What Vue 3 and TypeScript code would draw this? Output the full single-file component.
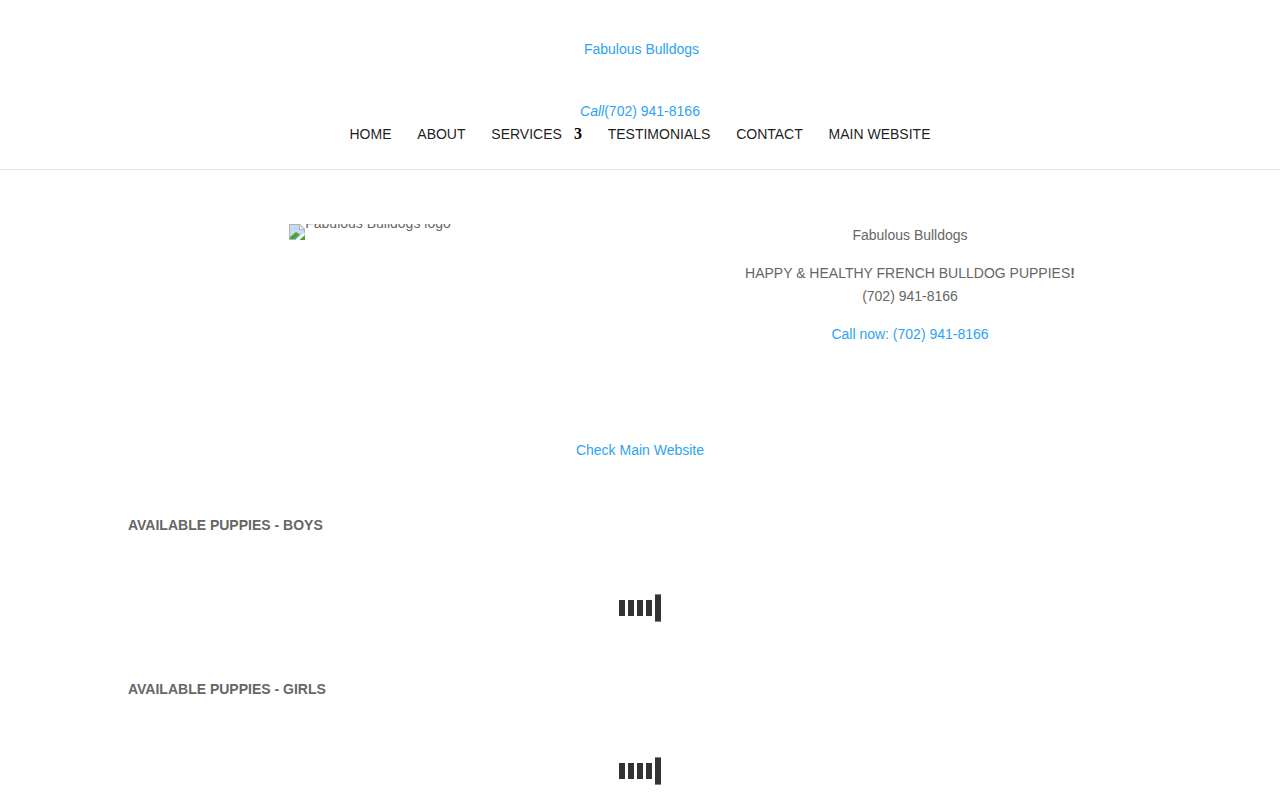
<script setup lang="ts">
const navItems = ['Home', 'About', 'Services', 'Testimonials', 'Contact', 'Main Website'];
const sections = ['Available Puppies - Boys', 'Available Puppies - Girls'];
const bars = [0, 1, 2, 3, 4];
</script>

<template>
  <div class="page">
    <header class="site-header">
      <a class="brand" href="#">Fabulous Bulldogs</a>
      <a class="call" href="#"><em>Call</em>(702) 941-8166</a>
      <nav class="nav">
        <a v-for="item in navItems" :key="item" class="nav-link" href="#">
          {{ item }}<span v-if="item === 'Services'" class="caret">3</span>
        </a>
      </nav>
    </header>

    <main class="content">
      <section class="intro">
        <div class="logo-col">
          <span class="broken-img">
            <svg class="broken-icon" width="16" height="16" viewBox="0 0 16 16" aria-hidden="true">
              <path d="M0 0H11L16 5V11L11 16H0Z" fill="#b4b4b4" />
              <path d="M1 1H10V6H15V10.5L10.5 15H1Z" fill="#c8daf6" />
              <path d="M11 1.5L14.5 5H11Z" fill="#f6f6f6" />
              <path d="M1 15V13L7 8L11 10.5L6.5 15Z" fill="#4aa63f" />
              <path d="M11 15L16 11V16H11Z" fill="#4aa63f" />
              <path d="M6.5 16L15.5 8.5V11L10.5 16Z" fill="#fff" />
            </svg>
            <span class="alt">Fabulous Bulldogs logo</span>
          </span>
        </div>
        <div class="info-col">
          <p>Fabulous Bulldogs</p>
          <p>HAPPY &amp; HEALTHY FRENCH BULLDOG PUPPIES<b>!</b><br />(702) 941-8166</p>
          <p><a href="#">Call now: (702) 941-8166</a></p>
        </div>
      </section>

      <p class="main-link"><a href="#">Check Main Website</a></p>

      <section v-for="title in sections" :key="title" class="puppies">
        <h2>{{ title }}</h2>
        <div class="loader" aria-label="Loading">
          <span v-for="bar in bars" :key="bar" class="bar" :class="{ tall: bar === 4 }"></span>
        </div>
      </section>
    </main>
  </div>
</template>

<style scoped>
.page {
  height: 800px;
  overflow: hidden;
  font-family: "Liberation Sans", Arial, sans-serif;
  font-size: 14px;
  line-height: 23.8px;
  color: #666;
}

a {
  color: #2ea3f2;
  text-decoration: none;
}

.site-header {
  height: 169px;
  border-bottom: 1px solid #e2e2e2;
  display: flex;
  flex-direction: column;
  align-items: center;
}

.brand {
  margin-top: 38px;
  margin-left: 3px;
}

.call {
  margin-top: 38px;
}

.nav {
  display: flex;
  gap: 25.8px;
}

.nav-link {
  color: rgba(0, 0, 0, 0.9);
  text-transform: uppercase;
  line-height: 20px;
  white-space: nowrap;
}

.caret {
  margin-left: 12px;
  font-family: "Liberation Serif", serif;
  font-weight: 700;
  font-size: 16px;
  color: #000;
}

.content {
  width: 1024px;
  margin: 0 auto;
}

.intro {
  display: grid;
  grid-template-columns: 484px 484px;
  column-gap: 56px;
  padding-top: 54px;
  height: 214px;
}

.logo-col {
  text-align: center;
}

.broken-img {
  display: inline-flex;
  height: 16px;
  overflow: hidden;
  line-height: 16px;
  vertical-align: top;
}

.broken-icon {
  flex: none;
}

.alt {
  margin-top: -9px;
}

.info-col {
  text-align: center;
  line-height: 23px;
}

.info-col p {
  margin: 0 0 15px;
}

.info-col b {
  font-weight: 700;
}

.main-link {
  margin: 0;
  text-align: center;
  line-height: 24px;
}

.puppies h2 {
  margin: 0;
  font-size: 14px;
  line-height: 16px;
  font-weight: 700;
  text-transform: uppercase;
}

.main-link + .puppies {
  margin-top: 55px;
}

.puppies {
  height: 163.6px;
}

.loader {
  margin-top: 61.7px;
  display: flex;
  justify-content: center;
  align-items: center;
  gap: 3px;
  height: 26px;
}

.bar {
  width: 6px;
  height: 16px;
  background: #333;
}

.bar.tall {
  transform: scaleY(1.7);
}
</style>
